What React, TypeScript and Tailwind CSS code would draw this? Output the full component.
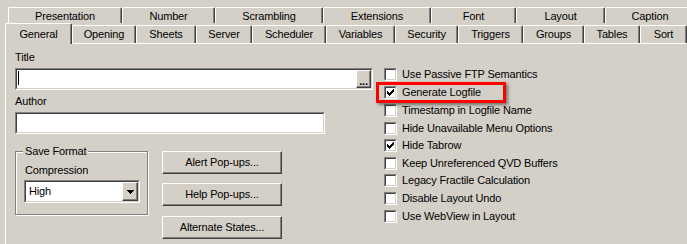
import React from "react";

const backTabs = [
  { label: "Presentation", w: "w-[114px]" },
  { label: "Number", w: "w-[93px]" },
  { label: "Scrambling", w: "w-[108px]" },
  { label: "Extensions", w: "w-[108px]" },
  { label: "Font", w: "w-[85px]" },
  { label: "Layout", w: "w-[89px]" },
  { label: "Caption", w: "w-[90px]" },
];

const frontTabs = [
  { label: "Opening", w: "w-[64px]" },
  { label: "Sheets", w: "w-[60px]" },
  { label: "Server", w: "w-[56px]" },
  { label: "Scheduler", w: "w-[74px]" },
  { label: "Variables", w: "w-[69px]" },
  { label: "Security", w: "w-[63px]" },
  { label: "Triggers", w: "w-[65px]" },
  { label: "Groups", w: "w-[61px]" },
  { label: "Tables", w: "w-[56px]" },
  { label: "Sort", w: "w-[47px]" },
];

const options = [
  { label: "Use Passive FTP Semantics", checked: false, h: "h-[18px]" },
  { label: "Generate Logfile", checked: true, h: "h-[18px]" },
  { label: "Timestamp in Logfile Name", checked: false, h: "h-[18px]" },
  { label: "Hide Unavailable Menu Options", checked: false, h: "h-[17px]" },
  { label: "Hide Tabrow", checked: true, h: "h-[18px]" },
  { label: "Keep Unreferenced QVD Buffers", checked: false, h: "h-[17px]" },
  { label: "Legacy Fractile Calculation", checked: false, h: "h-[18px]" },
  { label: "Disable Layout Undo", checked: false, h: "h-[18px]" },
  { label: "Use WebView in Layout", checked: false, h: "h-[18px]" },
];

function Tab({ label, w, pad = "" }: { label: string; w: string; pad?: string }) {
  return (
    <div
      className={`${w} ${pad} shrink-0 h-full flex items-center justify-center border-l border-t border-r border-l-white border-t-white border-r-[#404040] rounded-t-[2px] shadow-[inset_-1px_0_0_#808080] whitespace-nowrap`}
    >
      {label}
    </div>
  );
}

function CheckBox({ checked }: { checked: boolean }) {
  return (
    <div className="w-[13px] h-[13px] shrink-0 border-t border-l border-b border-r border-t-[#808080] border-l-[#808080] border-b-white border-r-white">
      <div className="w-full h-full bg-white border-t border-l border-b border-r border-t-[#404040] border-l-[#404040] border-b-[#d4d0c8] border-r-[#d4d0c8]">
        {checked && (
          <svg width="7" height="7" viewBox="0 0 7 7" className="ml-[1px] mt-[1px]" shapeRendering="crispEdges">
            <path
              fill="#000"
              d="M6 0h1v1h-1z M5 1h2v1h-2z M0 2h1v1h-1z M4 2h3v1h-3z M0 3h2v1h-2z M3 3h3v1h-3z M0 4h5v1h-5z M1 5h3v1h-3z M2 6h1v1h-1z"
            />
          </svg>
        )}
      </div>
    </div>
  );
}

function Button({ label }: { label: string }) {
  return (
    <div className="w-[120px] h-[23px] flex items-center justify-center border-t border-l border-b border-r border-t-white border-l-white border-b-[#404040] border-r-[#404040] shadow-[inset_-1px_-1px_0_#808080]">
      {label}
    </div>
  );
}

function Sunken({ className, children }: { className: string; children?: React.ReactNode }) {
  return (
    <div className={`${className} border-t border-l border-b border-r border-t-[#808080] border-l-[#808080] border-b-white border-r-white`}>
      <div className="w-full h-full bg-white flex border-t border-l border-b border-r border-t-[#404040] border-l-[#404040] border-b-[#d4d0c8] border-r-[#d4d0c8]">
        {children}
      </div>
    </div>
  );
}

export default function App() {
  return (
    <div className="relative w-[687px] h-[244px] overflow-hidden bg-[#d4d0c8] text-black text-[11px] leading-[13px] tracking-[-0.15px] font-['Liberation_Sans',Arial,sans-serif] flex flex-col pt-[7px]">
      {/* back tab row */}
      <div className="flex h-[16px] pl-[8px]">
        {backTabs.map((t) => (
          <Tab key={t.label} label={t.label} w={t.w} pad="pt-[2px]" />
        ))}
      </div>

      {/* front tab row */}
      <div className="relative z-10 flex items-start h-[18px] mt-[2px] pl-[5px]">
        <div className="w-[67px] shrink-0 h-[21px] -mt-[2px] bg-[#d4d0c8] flex justify-center pt-[4px] border-l border-t border-r border-l-white border-t-white border-r-[#404040] rounded-t-[2px] shadow-[inset_-1px_0_0_#808080]">
          General
        </div>
        {frontTabs.map((t) => (
          <Tab key={t.label} label={t.label} w={t.w} />
        ))}
      </div>

      {/* panel */}
      <div className="ml-[5px] flex-1 flex border-l border-t border-white pl-[9px] pt-[7px]">
        <div className="w-[358px] shrink-0 flex flex-col">
          <div>Title</div>
          <Sunken className="mt-[4px] w-[358px] h-[22px]">
            <div className="ml-[1px] mt-[1px] w-px h-[14px] bg-black" />
            <div className="ml-auto w-[15px] h-full flex items-end justify-center pb-[1px] font-bold leading-[10px] border-t border-l border-b border-r border-t-white border-l-white border-b-[#404040] border-r-[#404040] bg-[#d4d0c8] shadow-[inset_-1px_-1px_0_#808080]">
              ...
            </div>
          </Sunken>
          <div className="mt-[5px]">Author</div>
          <Sunken className="mt-[4px] w-[310px] h-[22px]" />

          <div className="flex mt-[17px]">
            {/* Save Format group */}
            <div className="relative w-[133px] h-[64px] border border-[#808080] shadow-[inset_1px_1px_0_#fff,1px_1px_0_#fff] pl-[8px] pt-[12px]">
              <div className="absolute -top-[7px] left-[7px] px-[2px] bg-[#d4d0c8]">Save Format</div>
              <div className="pl-px">Compression</div>
              <Sunken className="mt-[3px] w-[116px] h-[23px]">
                <div className="pl-[3px] self-center">High</div>
                <div className="ml-auto w-[16px] h-full flex items-center justify-center border-t border-l border-b border-r border-t-white border-l-white border-b-[#404040] border-r-[#404040] bg-[#d4d0c8] shadow-[inset_-1px_-1px_0_#808080]">
                  <svg width="7" height="4" viewBox="0 0 7 4" shapeRendering="crispEdges">
                    <path fill="#000" d="M0 0h7v1h-7z M1 1h5v1h-5z M2 2h3v1h-3z M3 3h1v1h-1z" />
                  </svg>
                </div>
              </Sunken>
            </div>

            <div className="ml-[14px] flex flex-col">
              <Button label="Alert Pop-ups..." />
              <div className="mt-[9px]">
                <Button label="Help Pop-ups..." />
              </div>
              <div className="mt-[10px]">
                <Button label="Alternate States..." />
              </div>
            </div>
          </div>
        </div>

        {/* options */}
        <div className="ml-[11px] pt-[17px] flex flex-col">
          {options.map((o) => (
            <div key={o.label} className={`${o.h} flex items-start`}>
              <CheckBox checked={o.checked} />
              <span className="ml-[5px] whitespace-nowrap">{o.label}</span>
            </div>
          ))}
        </div>
      </div>

      {/* red annotation */}
      <div className="absolute left-[376px] top-[82px] w-[130px] h-[21px] border-[3px] border-[#ff0000] shadow-[2px_2px_3px_rgba(0,0,0,0.45)]" />
    </div>
  );
}
